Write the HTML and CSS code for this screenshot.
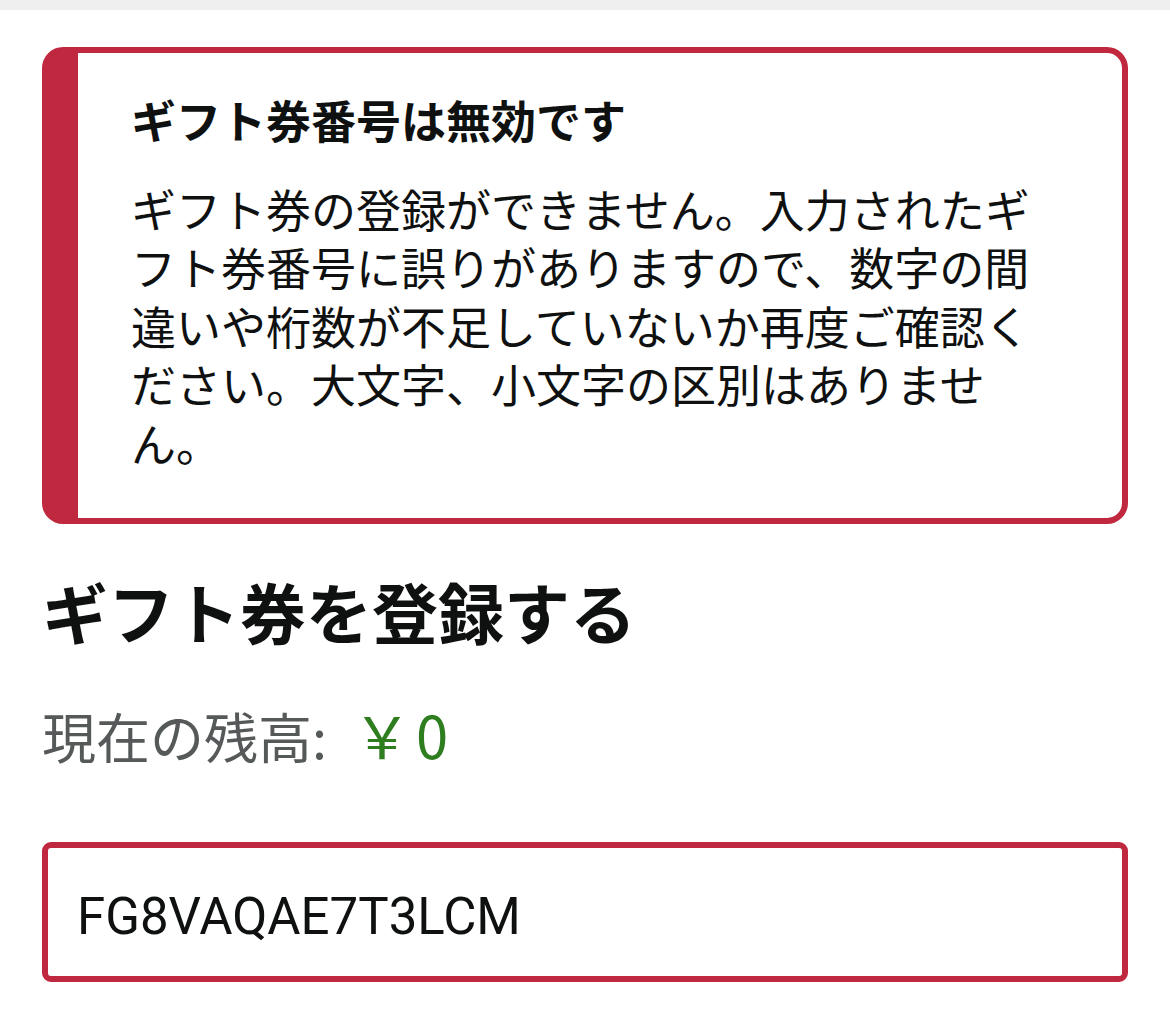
FILE: index.html
```html
<!DOCTYPE html>
<html lang="ja">
<head>
<meta charset="utf-8">
<title>ギフト券を登録する</title>
<link rel="stylesheet" href="styles.css">
</head>
<body>
<div class="topbar"></div>
<main class="page">
  <section class="alert" role="alert">
    <h4 class="alert-title">ギフト券番号は無効です</h4>
    <p class="alert-text">ギフト券の登録ができません。入力されたギフト券番号に誤りがありますので、数字の間違いや桁数が不足していないか再度ご確認ください。大文字、小文字の区別はありません。</p>
  </section>
  <h1 class="heading">ギフト券を登録する</h1>
  <div class="balance">現在の残高:<span class="amount">￥0</span></div>
  <input class="field" type="text" value="FG8VAQAE7T3LCM" readonly>
</main>
</body>
</html>
```
FILE: styles.css
```css
body {
  margin: 0;
  background: #ffffff;
  font-family: "Noto Sans CJK JP", "Noto Sans", sans-serif;
  color: #0f1111;
}

.topbar {
  height: 10px;
  background: #efefef;
}

.page {
  padding: 37px 42px 40px;
}

.alert {
  border: 6px solid #c0283f;
  border-left-width: 36px;
  border-radius: 21px;
  padding: 38px 53px 46px 53px;
}

.alert-title {
  font-size: 45px;
  font-weight: 700;
  line-height: 58.5px;
  margin: 0 0 30px;
}

.alert-text {
  font-size: 45px;
  line-height: 58.6px;
  margin: 0;
}

.heading {
  font-size: 66px;
  font-weight: 700;
  line-height: 86px;
  margin: 43px 0 0;
}

.balance {
  font-size: 54px;
  line-height: 70px;
  color: #565959;
  margin-top: 46px;
}

.amount {
  font-size: 58px;
  color: #2e7d1f;
  margin-left: 26px;
  letter-spacing: 5px;
}

.field {
  display: block;
  width: 100%;
  box-sizing: border-box;
  height: 140px;
  margin-top: 71px;
  border: 6px solid #c0283f;
  border-radius: 9px;
  padding: 8px 0 0 29px;
  font-family: Roboto, "Liberation Sans", Arial, sans-serif;
  font-size: 51px;
  letter-spacing: 0;
  color: #0f1111;
  background: #ffffff;
  outline: none;
}
```
